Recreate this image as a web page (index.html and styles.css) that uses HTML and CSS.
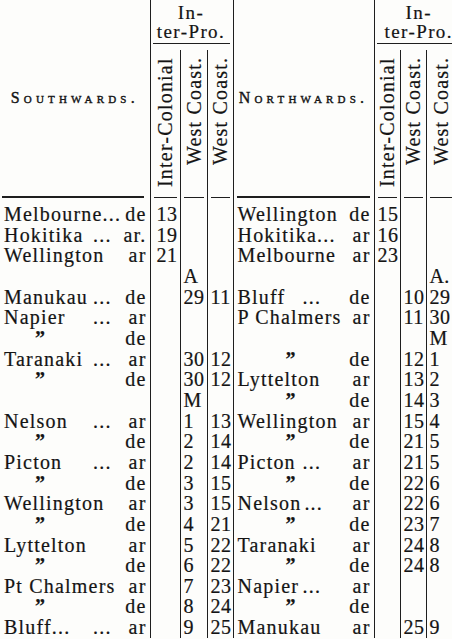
FILE: index.html
```
<!DOCTYPE html>
<html>
<head>
<meta charset="utf-8">
<link rel="stylesheet" href="styles.css">
</head>
<body>
<table class="tt">
  <colgroup>
    <col class="c-lab-l"><col class="c-ic-l"><col class="c-wc1-l"><col class="c-wc2-l">
    <col class="c-lab-r"><col class="c-ic-r"><col class="c-wc1-r"><col class="c-wc2-r">
  </colgroup>
  <thead>
    <tr class="h1">
      <th rowspan="2" class="dir">Southwards.</th>
      <th colspan="3" class="grp vl"><div class="grp-in">In-<br>ter-Pro.</div></th>
      <th rowspan="2" class="dir vl">Northwards.</th>
      <th colspan="3" class="grp vl"><div class="grp-in">In-<br>ter-Pro.</div></th>
    </tr>
    <tr class="h2">
      <th class="vert vl"><div class="vt">Inter-Colonial</div></th>
      <th class="vert vl"><div class="vt">West Coast.</div></th>
      <th class="vert vl"><div class="vt">West Coast.</div></th>
      <th class="vert vl"><div class="vt">Inter-Colonial</div></th>
      <th class="vert vl"><div class="vt">West Coast.</div></th>
      <th class="vert vl"><div class="vt vt-last">West Coast.</div></th>
    </tr>
  </thead>
  <tbody>
    <tr class="rule">
      <td><span class="rl rl-lab-l"></span></td>
      <td class="vl"><span class="rl"></span></td>
      <td class="vl"><span class="rl"></span></td>
      <td class="vl"><span class="rl"></span></td>
      <td class="vl"><span class="rl rl-lab-r"></span></td>
      <td class="vl"><span class="rl"></span></td>
      <td class="vl"><span class="rl"></span></td>
      <td class="vl"><span class="rl"></span></td>
    </tr>
    <tr>
      <td><div class="lab l"><span class="nm">Melbourne...</span><span class="sf">de</span></div></td>
      <td class="vl n ic">13</td><td class="vl n"></td><td class="vl n"></td>
      <td class="vl"><div class="lab r"><span class="nm">Wellington</span><span class="sf">de</span></div></td>
      <td class="vl n">15</td><td class="vl n"></td><td class="vl n"></td>
    </tr>
    <tr>
      <td><div class="lab l"><span class="nm">Hokitika</span><span class="dt">...</span><span class="sf">ar.</span></div></td>
      <td class="vl n ic">19</td><td class="vl n"></td><td class="vl n"></td>
      <td class="vl"><div class="lab r"><span class="nm">Hokitika...</span><span class="sf">ar</span></div></td>
      <td class="vl n">16</td><td class="vl n"></td><td class="vl n"></td>
    </tr>
    <tr>
      <td><div class="lab l"><span class="nm">Wellington</span><span class="sf">ar</span></div></td>
      <td class="vl n ic">21</td><td class="vl n"></td><td class="vl n"></td>
      <td class="vl"><div class="lab r"><span class="nm">Melbourne</span><span class="sf">ar</span></div></td>
      <td class="vl n">23</td><td class="vl n"></td><td class="vl n"></td>
    </tr>
    <tr>
      <td></td>
      <td class="vl n ic"></td><td class="vl n">A</td><td class="vl n"></td>
      <td class="vl"></td>
      <td class="vl n"></td><td class="vl n"></td><td class="vl n">A.</td>
    </tr>
    <tr>
      <td><div class="lab l"><span class="nm">Manukau</span><span class="dt">...</span><span class="sf">de</span></div></td>
      <td class="vl n ic"></td><td class="vl n">29</td><td class="vl n">11</td>
      <td class="vl"><div class="lab r"><span class="nm">Bluff</span><span class="dt">...</span><span class="sf">de</span></div></td>
      <td class="vl n"></td><td class="vl n">10</td><td class="vl n">29</td>
    </tr>
    <tr>
      <td><div class="lab l"><span class="nm">Napier</span><span class="dt">...</span><span class="sf">ar</span></div></td>
      <td class="vl n ic"></td><td class="vl n"></td><td class="vl n"></td>
      <td class="vl"><div class="lab r"><span class="nm">P Chalmers</span><span class="sf">ar</span></div></td>
      <td class="vl n"></td><td class="vl n">11</td><td class="vl n">30</td>
    </tr>
    <tr>
      <td><div class="lab l"><span class="dit">”</span><span class="sf">de</span></div></td>
      <td class="vl n ic"></td><td class="vl n"></td><td class="vl n"></td>
      <td class="vl"></td>
      <td class="vl n"></td><td class="vl n"></td><td class="vl n">M</td>
    </tr>
    <tr>
      <td><div class="lab l"><span class="nm">Taranaki</span><span class="dt">...</span><span class="sf">ar</span></div></td>
      <td class="vl n ic"></td><td class="vl n">30</td><td class="vl n">12</td>
      <td class="vl"><div class="lab r"><span class="dit">”</span><span class="sf">de</span></div></td>
      <td class="vl n"></td><td class="vl n">12</td><td class="vl n">1</td>
    </tr>
    <tr>
      <td><div class="lab l"><span class="dit">”</span><span class="sf">de</span></div></td>
      <td class="vl n ic"></td><td class="vl n">30</td><td class="vl n">12</td>
      <td class="vl"><div class="lab r"><span class="nm">Lyttelton</span><span class="sf">ar</span></div></td>
      <td class="vl n"></td><td class="vl n">13</td><td class="vl n">2</td>
    </tr>
    <tr>
      <td></td>
      <td class="vl n ic"></td><td class="vl n">M</td><td class="vl n"></td>
      <td class="vl"><div class="lab r"><span class="dit">”</span><span class="sf">de</span></div></td>
      <td class="vl n"></td><td class="vl n">14</td><td class="vl n">3</td>
    </tr>
    <tr>
      <td><div class="lab l"><span class="nm">Nelson</span><span class="dt">...</span><span class="sf">ar</span></div></td>
      <td class="vl n ic"></td><td class="vl n">1</td><td class="vl n">13</td>
      <td class="vl"><div class="lab r"><span class="nm">Wellington</span><span class="sf">ar</span></div></td>
      <td class="vl n"></td><td class="vl n">15</td><td class="vl n">4</td>
    </tr>
    <tr>
      <td><div class="lab l"><span class="dit">”</span><span class="sf">de</span></div></td>
      <td class="vl n ic"></td><td class="vl n">2</td><td class="vl n">14</td>
      <td class="vl"><div class="lab r"><span class="dit">”</span><span class="sf">de</span></div></td>
      <td class="vl n"></td><td class="vl n">21</td><td class="vl n">5</td>
    </tr>
    <tr>
      <td><div class="lab l"><span class="nm">Picton</span><span class="dt">...</span><span class="sf">ar</span></div></td>
      <td class="vl n ic"></td><td class="vl n">2</td><td class="vl n">14</td>
      <td class="vl"><div class="lab r"><span class="nm">Picton</span><span class="dt">...</span><span class="sf">ar</span></div></td>
      <td class="vl n"></td><td class="vl n">21</td><td class="vl n">5</td>
    </tr>
    <tr>
      <td><div class="lab l"><span class="dit">”</span><span class="sf">de</span></div></td>
      <td class="vl n ic"></td><td class="vl n">3</td><td class="vl n">15</td>
      <td class="vl"><div class="lab r"><span class="dit">”</span><span class="sf">de</span></div></td>
      <td class="vl n"></td><td class="vl n">22</td><td class="vl n">6</td>
    </tr>
    <tr>
      <td><div class="lab l"><span class="nm">Wellington</span><span class="sf">ar</span></div></td>
      <td class="vl n ic"></td><td class="vl n">3</td><td class="vl n">15</td>
      <td class="vl"><div class="lab r"><span class="nm">Nelson</span><span class="dt">...</span><span class="sf">ar</span></div></td>
      <td class="vl n"></td><td class="vl n">22</td><td class="vl n">6</td>
    </tr>
    <tr>
      <td><div class="lab l"><span class="dit">”</span><span class="sf">de</span></div></td>
      <td class="vl n ic"></td><td class="vl n">4</td><td class="vl n">21</td>
      <td class="vl"><div class="lab r"><span class="dit">”</span><span class="sf">de</span></div></td>
      <td class="vl n"></td><td class="vl n">23</td><td class="vl n">7</td>
    </tr>
    <tr>
      <td><div class="lab l"><span class="nm">Lyttelton</span><span class="sf">ar</span></div></td>
      <td class="vl n ic"></td><td class="vl n">5</td><td class="vl n">22</td>
      <td class="vl"><div class="lab r"><span class="nm">Taranaki</span><span class="sf">ar</span></div></td>
      <td class="vl n"></td><td class="vl n">24</td><td class="vl n">8</td>
    </tr>
    <tr>
      <td><div class="lab l"><span class="dit">”</span><span class="sf">de</span></div></td>
      <td class="vl n ic"></td><td class="vl n">6</td><td class="vl n">22</td>
      <td class="vl"><div class="lab r"><span class="dit">”</span><span class="sf">de</span></div></td>
      <td class="vl n"></td><td class="vl n">24</td><td class="vl n">8</td>
    </tr>
    <tr>
      <td><div class="lab l"><span class="nm">Pt Chalmers</span><span class="sf">ar</span></div></td>
      <td class="vl n ic"></td><td class="vl n">7</td><td class="vl n">23</td>
      <td class="vl"><div class="lab r"><span class="nm">Napier</span><span class="dt">...</span><span class="sf">ar</span></div></td>
      <td class="vl n"></td><td class="vl n"></td><td class="vl n"></td>
    </tr>
    <tr>
      <td><div class="lab l"><span class="dit">”</span><span class="sf">de</span></div></td>
      <td class="vl n ic"></td><td class="vl n">8</td><td class="vl n">24</td>
      <td class="vl"><div class="lab r"><span class="dit">”</span><span class="sf">de</span></div></td>
      <td class="vl n"></td><td class="vl n"></td><td class="vl n"></td>
    </tr>
    <tr>
      <td><div class="lab l"><span class="nm">Bluff...</span><span class="dt">...</span><span class="sf">ar</span></div></td>
      <td class="vl n ic"></td><td class="vl n">9</td><td class="vl n">25</td>
      <td class="vl"><div class="lab r"><span class="nm">Manukau</span><span class="sf">ar</span></div></td>
      <td class="vl n"></td><td class="vl n">25</td><td class="vl n">9</td>
    </tr>
  </tbody>
</table>
</body>
</html>
```

FILE: styles.css
```
html, body {
  margin: 0;
  padding: 0;
  background: #fdfdfb;
}
body {
  width: 452px;
  height: 639px;
  overflow: hidden;
  font-family: "Liberation Serif", "Times New Roman", serif;
  color: #141414;
  -webkit-text-stroke: 0.2px #141414;
}
.tt {
  border-collapse: collapse;
  table-layout: fixed;
  width: 464px;
}
.c-lab-l { width: 150px; }
.c-ic-l { width: 30px; }
.c-wc1-l { width: 27px; }
.c-wc2-l { width: 26px; }
.c-lab-r { width: 141px; }
.c-ic-r { width: 26px; }
.c-wc1-r { width: 26px; }
.c-wc2-r { width: 38px; }

th, td {
  padding: 0;
  font-weight: normal;
  white-space: nowrap;
}
.vl { border-left: 1px solid #1e1e1e; }

.h1 th { height: 50px; }
.grp { vertical-align: top; }
.grp-in {
  margin: 0 3px 0 2px;
  padding: 3px 0 2px;
  border-bottom: 1px solid #1e1e1e;
  font-size: 19px;
  line-height: 19px;
  letter-spacing: 1.4px;
  text-align: center;
}
.dir {
  font-size: 16px;
  font-variant: small-caps;
  letter-spacing: 4.2px;
  text-align: center;
  vertical-align: middle;
  -webkit-text-stroke: 0.4px #141414;
}
.h2 th { height: 138px; }
.vert {
  vertical-align: top;
  padding-top: 7px;
}
.vt {
  display: block;
  margin: 0 auto;
  width: 22px;
  height: 136px;
  writing-mode: vertical-rl;
  transform: rotate(180deg);
  text-align: end;
  font-size: 20px;
  line-height: 22px;
  letter-spacing: 1.2px;
}
.vt.vt-last { margin: 0 0 0 3px; }

tbody tr { height: 20.65px; }
tbody tr.rule { height: 9px; }
.rule td {
  height: 9px;
  line-height: 0;
  vertical-align: top;
}
.rl {
  display: block;
  height: 1px;
  margin: 2px 3px 0;
  background: #1e1e1e;
}
.rl-lab-l { height: 2px; margin: 1px 6px 0 2px; }
.rl-lab-r { height: 2px; margin: 1px 4px 0 3px; }

tbody td {
  height: 20.65px;
  line-height: 20.65px;
  font-size: 20px;
  letter-spacing: 1.2px;
  vertical-align: middle;
}
.n {
  padding-left: 3px;
  letter-spacing: 0.4px;
}
.n.ic { padding-left: 6px; }
.lab {
  display: flex;
  padding: 0 3px 0 4px;
}
.lab.r { padding-left: 4px; }
.lab.l .nm { min-width: 86px; }
.lab.r .nm { min-width: 62px; }
.dt { margin-left: 3px; }
.sf { margin-left: auto; }
.dit {
  vertical-align: 5px;
  font-weight: bold;
}
.lab.l .dit { margin-left: 31px; }
.lab.r .dit { margin-left: 48px; }
```
